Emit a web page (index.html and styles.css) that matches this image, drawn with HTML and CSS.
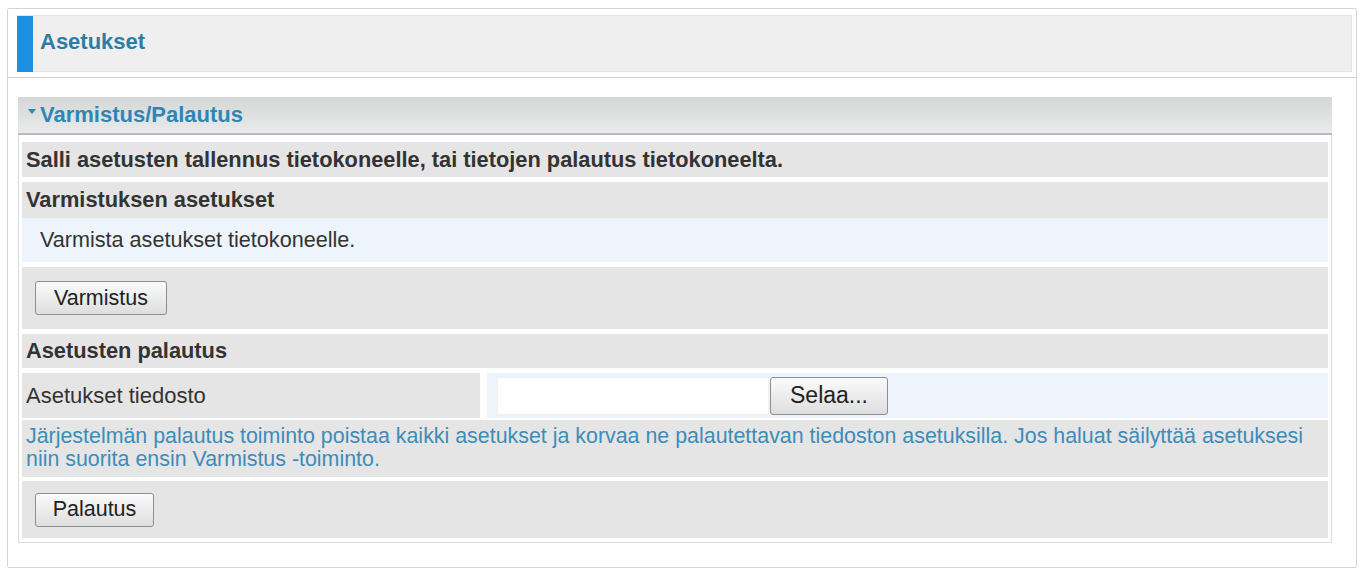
FILE: index.html
```html
<!DOCTYPE html>
<html lang="fi">
<head>
<meta charset="utf-8">
<title>Asetukset</title>
<link rel="stylesheet" href="styles.css">
</head>
<body>
<div class="frame">
  <div class="top">
    <div class="title-box">
      <span class="title-bar"></span>
      <span class="title-text">Asetukset</span>
    </div>
  </div>
  <div class="panel">
    <div class="panel-head"><span class="tri"></span>Varmistus/Palautus</div>
    <div class="panel-body">
      <div class="row r-intro bold">Salli asetusten tallennus tietokoneelle, tai tietojen palautus tietokoneelta.</div>
      <div class="row r-sub bold">Varmistuksen asetukset</div>
      <div class="row r-blue">Varmista asetukset tietokoneelle.</div>
      <div class="row r-btn"><button class="btn btn-varm">Varmistus</button></div>
      <div class="row r-sub2 bold">Asetusten palautus</div>
      <div class="split">
        <div class="cell-label">Asetukset tiedosto</div>
        <div class="cell-input">
          <span class="file-field"></span>
          <button class="btn btn-browse">Selaa...</button>
        </div>
      </div>
      <div class="row r-info">Järjestelmän palautus toiminto poistaa kaikki asetukset ja korvaa ne palautettavan tiedoston asetuksilla. Jos haluat säilyttää asetuksesi niin suorita ensin Varmistus -toiminto.</div>
      <div class="row r-btn r-last"><button class="btn btn-pal">Palautus</button></div>
    </div>
  </div>
</div>
</body>
</html>
```

FILE: styles.css
```css
* { box-sizing: border-box; }
html, body { margin: 0; padding: 0; background: #fff; }
body {
  font-family: "Liberation Sans", Arial, sans-serif;
  font-size: 21.6px;
  color: #333;
}
.frame {
  margin: 8px 5px 0 7px;
  height: 560px;
  border: 1px solid #d4d4d4;
  border-radius: 2px;
}
.top {
  padding: 6px 4px 5px 9px;
  border-bottom: 1px solid #cfcfcf;
}
.title-box {
  height: 57px;
  background: #efefef;
  border: 1px solid #e4e4e4;
  display: flex;
  align-items: center;
}
.title-bar {
  width: 16px;
  height: 56px;
  margin-left: -1px;
  background: #1f8fdf;
  align-self: flex-start;
}
.title-text {
  margin-left: 7px;
  margin-top: -3px;
  font-weight: bold;
  font-size: 22px;
  color: #2c7ca6;
}
.panel {
  margin: 19px 24px 0 10px;
}
.panel-head {
  height: 38px;
  display: flex;
  align-items: center;
  padding-left: 10px;
  background: linear-gradient(#d5d8d8, #e9eaea);
  border-bottom: 2px solid #b9b9c6;
  font-weight: bold;
  font-size: 22px;
  color: #2e86b6;
}
.tri {
  width: 0;
  height: 0;
  border-left: 4px solid transparent;
  border-right: 4px solid transparent;
  border-top: 5px solid #2e86b6;
  margin-right: 4px;
  margin-top: -8px;
}
.panel-body {
  border: 1px solid #dcdcdc;
  border-top: none;
  padding: 7px 3px 4px 3px;
  display: flex;
  flex-direction: column;
  gap: 5px;
}
.row {
  background: #e5e5e5;
  padding: 0 4px;
  display: flex;
  align-items: center;
}
.bold { font-weight: bold; font-size: 21.8px; }
.r-intro { height: 35px; }
.r-sub { height: 36px; }
.r-sub2 { height: 34px; }
.r-blue {
  height: 44px;
  margin-top: -5px;
  background: #eef4fb;
  padding-left: 18px;
}
.r-btn { height: 62px; padding-left: 13px; }
.r-last { height: 57px; margin-top: -1px; }
.split {
  display: flex;
  height: 45px;
  gap: 7px;
}
.cell-label {
  width: 458px;
  background: #e5e5e5;
  display: flex;
  align-items: center;
  padding-left: 4px;
  font-size: 22px;
}
.cell-input {
  flex: 1;
  background: #eef4fb;
  display: flex;
  align-items: center;
  padding-left: 10px;
}
.file-field {
  width: 272px;
  height: 38px;
  background: #fff;
  border: 1px solid #f0f0f0;
}
.btn {
  font-family: "Liberation Sans", Arial, sans-serif;
  font-size: 21.5px;
  color: #222;
  background: linear-gradient(#fbfbfb, #dedede);
  border: 1px solid #8e8e8e;
  border-radius: 3px;
  padding: 0;
  height: 34px;
}
.btn-varm { width: 132px; }
.btn-pal { width: 119px; }
.btn-browse {
  width: 118px;
  height: 38px;
  font-size: 23px;
  margin-left: 1px;
}
.r-info {
  height: 57px;
  margin-top: -3px;
  padding: 5px 4px 0 4px;
  align-items: flex-start;
  color: #3d8cba;
  font-size: 21.4px;
  line-height: 23px;
}
```
